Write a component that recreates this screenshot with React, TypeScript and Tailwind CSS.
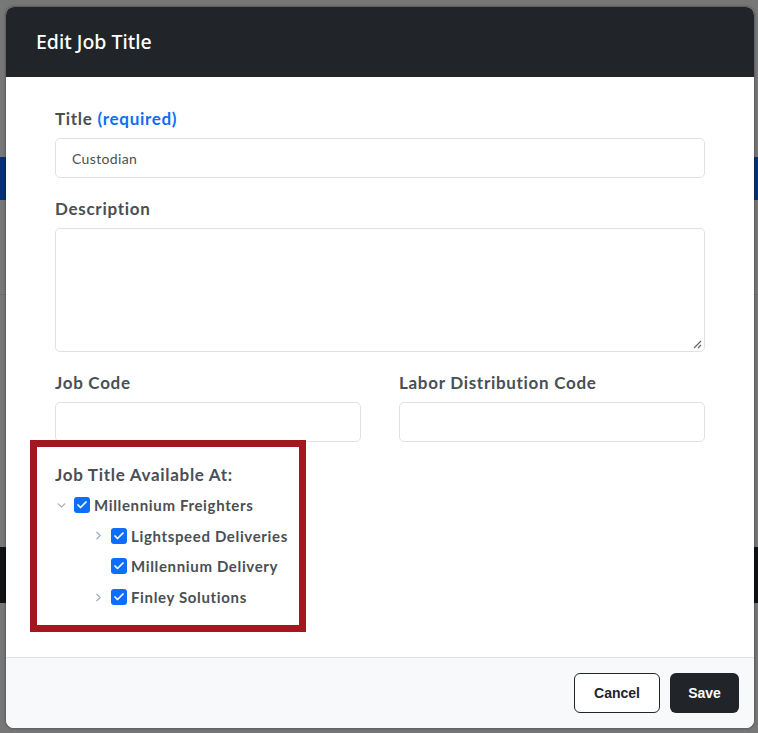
import { Check, ChevronDown, ChevronRight } from "lucide-react";

const tree = [
  { label: "Millennium Freighters", level: 0, toggle: "down" },
  { label: "Lightspeed Deliveries", level: 1, toggle: "right" },
  { label: "Millennium Delivery", level: 1, toggle: null },
  { label: "Finley Solutions", level: 1, toggle: "right" },
];

function Box() {
  return (
    <span className="flex h-4 w-4 shrink-0 items-center justify-center rounded-[3px] bg-[#0d6efd]">
      <Check className="h-3 w-3 text-white" strokeWidth={3.5} />
    </span>
  );
}

export default function App() {
  return (
    <div className="relative h-[733px] w-[758px] overflow-hidden bg-[#777777] font-['Lato',sans-serif]">
      {/* page behind the backdrop */}
      <div className="flex flex-col">
        <div className="h-[157px]" />
        <div className="h-[43px] bg-[#063274]" />
        <div className="h-[95px] border-b border-[#6c6c6c]" />
        <div className="h-[252px]" />
        <div className="h-[56px] bg-[#101214]" />
      </div>

      {/* modal */}
      <div className="absolute left-[6px] top-[7px] flex w-[748px] flex-col overflow-hidden rounded-lg bg-white shadow-[0_0_3px_rgba(0,0,0,0.5)]">
        <div className="flex h-[70px] items-center bg-[#212529] px-[30px]">
          <h1 className="font-['Noto_Sans',sans-serif] text-[19.5px] font-medium text-white">
            Edit Job Title
          </h1>
        </div>

        <div className="flex flex-col px-[49px] pt-[30px] pb-[45px] text-[#4a4f55]">
          <label className="text-[17px] font-bold leading-6 tracking-[0.7px]">
            Title <span className="text-[#0d6efd]">(required)</span>
          </label>
          <div className="mt-[7px] flex h-10 items-center rounded-[5px] border border-[#dee2e6] px-4 text-[14px] tracking-wide text-[#495057]">
            Custodian
          </div>

          <label className="mt-[19px] text-[17px] font-bold leading-6 tracking-[0.7px]">Description</label>
          <div className="relative mt-[7px] h-[124px] rounded-[5px] border border-[#dee2e6]">
            <svg className="absolute bottom-[2px] right-[2px]" width="9" height="9" viewBox="0 0 9 9">
              <path d="M8 1L1 8M8 5L5 8" stroke="#666" strokeWidth="1.2" />
            </svg>
          </div>

          <div className="mt-[19px] grid grid-cols-2 gap-[38px]">
            <div className="flex flex-col">
              <label className="text-[17px] font-bold leading-6 tracking-[0.7px]">Job Code</label>
              <div className="mt-[7px] h-10 rounded-[5px] border border-[#dee2e6]" />
            </div>
            <div className="flex flex-col">
              <label className="text-[17px] font-bold leading-6 tracking-[0.7px]">Labor Distribution Code</label>
              <div className="mt-[7px] h-10 rounded-[5px] border border-[#dee2e6]" />
            </div>
          </div>

          <div className="relative mt-[21px]">
            {/* annotation frame */}
            <div className="pointer-events-none absolute -left-[25px] -top-[23px] h-[192px] w-[276px] border-[7px] border-[#a3181f]" />
            <div className="text-[17px] font-bold leading-6 tracking-[0.7px]">Job Title Available At:</div>
            <div className="mt-[3px] flex flex-col">
              {tree.map((n) => (
                <div
                  key={n.label}
                  className={`flex h-[30.6px] items-center ${n.level ? "pl-[37px]" : "pl-0"}`}
                >
                  <span className="flex w-[19px] shrink-0 items-center">
                    {n.toggle === "down" && (
                      <ChevronDown className="h-[13px] w-[13px] text-[#a5b3bd]" strokeWidth={2.5} />
                    )}
                    {n.toggle === "right" && (
                      <ChevronRight className="h-[13px] w-[13px] text-[#a5b3bd]" strokeWidth={2.5} />
                    )}
                  </span>
                  <Box />
                  <span className="ml-[4px] text-[15px] font-bold tracking-[0.65px]">{n.label}</span>
                </div>
              ))}
            </div>
          </div>
        </div>

        <div className="flex h-[71px] items-center justify-end gap-[10px] border-t border-[#dee2e6] bg-[#f8f9fb] px-[15px] font-['Liberation_Sans',sans-serif]">
          <button className="h-10 w-[86px] rounded-md border border-[#212529] bg-white text-[14px] font-bold text-[#212529]">
            Cancel
          </button>
          <button className="h-10 w-[69px] rounded-md bg-[#212529] text-[14px] font-bold text-white">
            Save
          </button>
        </div>
      </div>
    </div>
  );
}
